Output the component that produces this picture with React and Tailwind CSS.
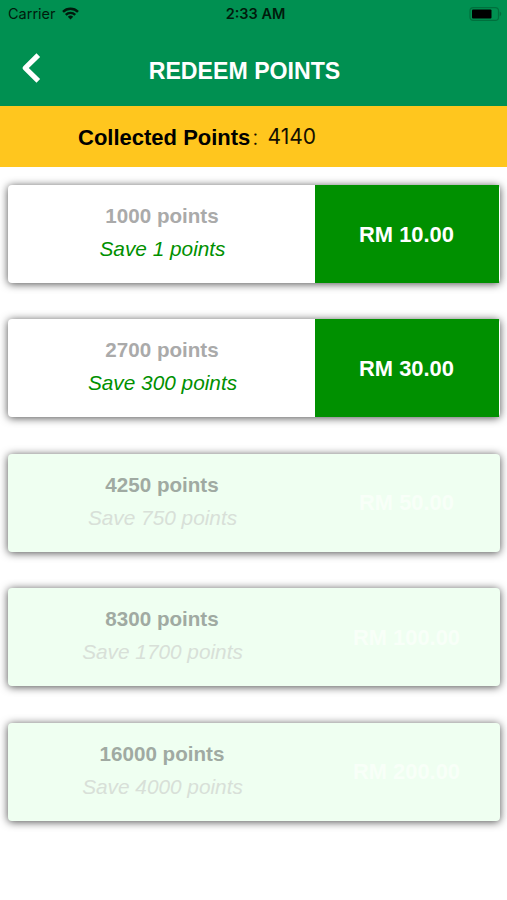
import React from 'react';

const rewards = [
  { points: 1000, save: 1, value: '10.00', available: true },
  { points: 2700, save: 300, value: '30.00', available: true },
  { points: 4250, save: 750, value: '50.00', available: false },
  { points: 8300, save: 1700, value: '100.00', available: false },
  { points: 16000, save: 4000, value: '200.00', available: false },
];

const WifiIcon = () => (
  <svg className="ml-[6px] w-[17px] h-[13px] -mt-[2px]" viewBox="0 0 17 13" fill="none" stroke="#001b0c" strokeWidth="2.4">
    <path d="M1 4.9a10.6 10.6 0 0 1 15 0" />
    <path d="M3.8 7.8a6.7 6.7 0 0 1 9.4 0" />
    <path d="M8.5 12.4 5.8 9.7a3.9 3.9 0 0 1 5.4 0Z" fill="#001b0c" stroke="none" />
  </svg>
);

const BatteryIcon = () => (
  <svg className="w-[33px] h-[14px] -mt-[1px]" viewBox="0 0 33 14">
    <rect x="1" y="0.6" width="28.5" height="12.8" rx="3.2" fill="none" stroke="#00703d" strokeWidth="1.2" />
    <rect x="3" y="2.5" width="19.5" height="9" rx="1" fill="#000" />
    <path d="M30.7 4.6c2 .8 2 3.8 0 4.6Z" fill="#00703d" />
  </svg>
);

const StatusBar = () => (
  <div className="h-[28px] grid grid-cols-3 items-center pl-[8px] pr-[5px] text-[#001b0c] font-['Inter',sans-serif] text-[14.5px] leading-none">
    <div className="flex items-center">
      <span>Carrier</span>
      <WifiIcon />
    </div>
    <span className="pl-[1px] text-center font-semibold">2:33 AM</span>
    <div className="flex justify-end">
      <BatteryIcon />
    </div>
  </div>
);

const RewardCard = ({ points, save, value, available }) => (
  <div
    className={`flex h-[98px] rounded-[4px] shadow-[0_1px_8px_rgba(0,0,0,0.7)] ${available ? 'bg-white' : 'bg-[#effff1]'}`}
  >
    <div className="w-[307px] flex flex-col items-center pt-[14px] pl-[1px] leading-[33.5px]">
      <p className={`h-[33px] text-[20.6px] font-bold ${available ? 'text-[#aaaaaa]' : 'text-[#a0aaa2]'}`}>{points} points</p>
      <p className={`pl-[1px] text-[20.8px] italic ${available ? 'text-[#009000]' : 'text-[#d8e0d8]'}`}>Save {save} points</p>
    </div>
    <div className={`flex-1 mr-[1px] flex items-center justify-center pt-[2px] pr-[1px] text-[21.9px] font-bold ${available ? 'bg-[#009000] text-white' : 'text-[#f8fff8]'}`}>
      RM {value}
    </div>
  </div>
);

export default function App() {
  return (
    <div className="h-[900px] bg-white overflow-hidden font-['Liberation_Sans',Arial,sans-serif]">
      <header className="h-[106px] bg-[#009051]">
        <StatusBar />
        <div className="h-[78px] grid grid-cols-[60px_1fr_60px] items-center pb-[1px]">
          <button className="pl-[21px] pt-[3px]" aria-label="Back">
            <svg className="w-[20px] h-[30px]" viewBox="0 0 20 30" fill="none" stroke="#fff" strokeWidth="5.2">
              <path d="M17.3 2.2 4.2 15l13.1 12.8" strokeLinejoin="round" />
            </svg>
          </button>
          <h1 className="pt-[10px] pr-[19px] -mr-[1px] text-center text-[23.15px] font-bold text-white">REDEEM POINTS</h1>
        </div>
      </header>

      <div className="h-[61px] bg-[#ffc61e] flex items-center pt-[1px] pl-[78px] text-[22px] text-[#140f00]">
        <span className="font-bold text-black">Collected Points</span>
        <span className="font-['Inter',sans-serif] font-light ml-[2px]">:</span>
        <span className="font-['Inter',sans-serif] text-[21px] ml-[9px]">4140</span>
      </div>

      <div className="flex flex-col gap-[36.4px] pt-[18px] pl-[8px] pr-[7px]">
        {rewards.map((reward) => (
          <RewardCard key={reward.points} {...reward} />
        ))}
      </div>
    </div>
  );
}
